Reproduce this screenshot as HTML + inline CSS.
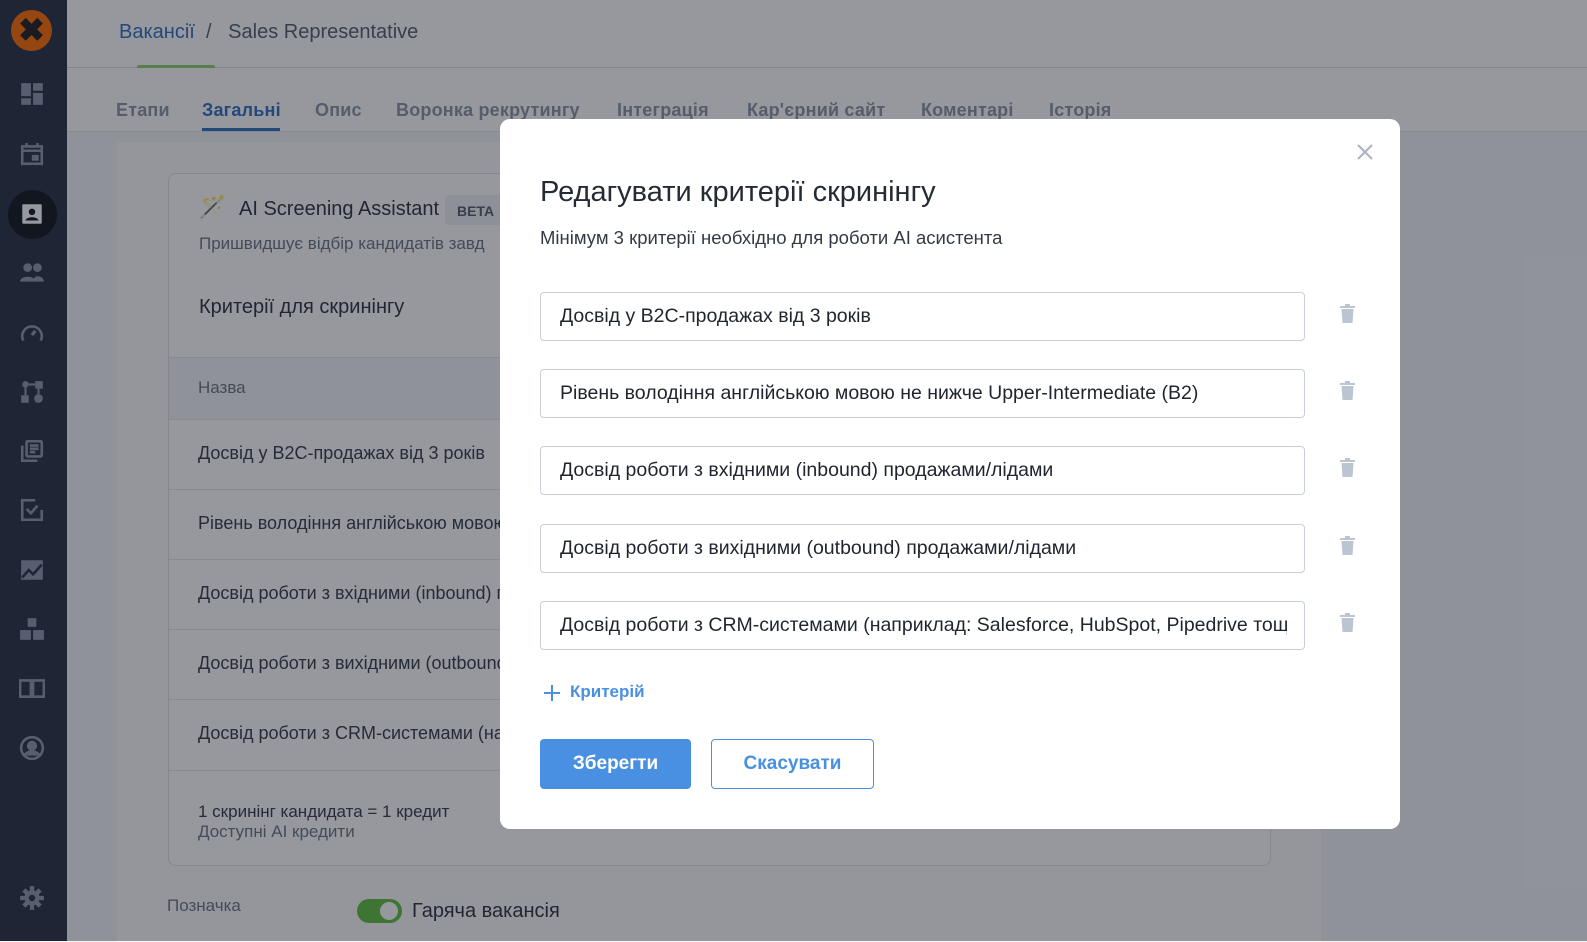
<!DOCTYPE html>
<html><head><meta charset="utf-8">
<style>
*{box-sizing:border-box;margin:0;padding:0}
body{width:1587px;height:941px;overflow:hidden;position:relative;font-family:"Liberation Sans",sans-serif;background:#f4f5f7;color:#333a45}
.abs{position:absolute}
.side{left:0;top:0;width:67px;height:941px;background:#262e40}
.ic{position:absolute;left:19px;width:26px;height:26px}
.hdr{left:67px;top:0;right:0;height:68px;background:#fff;border-bottom:1px solid #d5d9df}
.tabs{left:67px;top:68px;right:0;height:64px;background:#fff;border-bottom:1px solid #e1e4e8}
.tab{position:absolute;top:32px;font-size:18px;font-weight:bold;color:#8a93a2;letter-spacing:.2px}
.panel{left:117px;top:142px;width:1204px;height:800px;background:#fbfbfc}
.card{left:168px;top:173px;width:1103px;height:693px;border:1px solid #dde0e5;border-radius:8px;background:#fff}
.row{position:absolute;left:0;right:0;border-top:1px solid #e2e5e9;font-size:18px;color:#333a45;padding-left:29px}
.ov{left:0;top:0;width:1587px;height:941px;background:rgba(22,27,38,.45)}
.modal{left:500px;top:119px;width:900px;height:710px;background:#fff;border-radius:10px}
.inp{position:absolute;left:40px;width:765px;height:49px;border:1px solid #c9cfd9;border-radius:4px;font-size:19.5px;color:#1f252e;padding:12px 0 0 19px;white-space:nowrap;overflow:hidden}
.inp span{display:block;width:727px;overflow:hidden}
.tr{position:absolute;left:840px;width:15px;height:19px}
</style></head><body>
<div class="abs side">
  <div class="abs" style="left:11px;top:10px;width:41px;height:41px;border-radius:50%;background:#ff6a00"></div>
  <div class="abs" style="left:15px;top:14px;width:33px;height:33px;color:#1d1d1d;font-size:32px;font-weight:bold;line-height:33px;text-align:center">✖</div>
  <svg class="ic" style="top:81px" viewBox="0 0 24 24" fill="#8e96ad"><rect x="2" y="2" width="9" height="12"/><rect x="13" y="2" width="9" height="7"/><rect x="2" y="16" width="9" height="6"/><rect x="13" y="11" width="9" height="11"/></svg>
  <svg class="ic" style="top:141px" viewBox="0 0 24 24" fill="none" stroke="#8e96ad" stroke-width="2.4"><rect x="3" y="5" width="18" height="16"/><path d="M3 9h18M7 2v4M17 2v4"/><rect x="13" y="14" width="4" height="3" fill="#8e96ad"/></svg>
  <div class="abs" style="left:8px;top:190px;width:49px;height:49px;border-radius:50%;background:#0f131b"></div>
  <svg class="ic" style="top:201px" viewBox="0 0 24 24"><rect x="3" y="3" width="18" height="18" fill="#fff" rx="1"/><circle cx="12" cy="10" r="3" fill="#0f131b"/><path d="M6 18c1-4 11-4 12 0z" fill="#0f131b"/></svg>
  <svg class="ic" style="top:260px" viewBox="0 0 24 24" fill="#8e96ad"><circle cx="8" cy="7" r="4"/><circle cx="17" cy="7" r="4"/><path d="M1 20c0-6 14-6 14 0zM13 20c0-3 2-5 4-5s6 1 6 5z"/></svg>
  <svg class="ic" style="top:320px" viewBox="0 0 24 24" fill="none" stroke="#8e96ad" stroke-width="2.4"><path d="M4 19a9 9 0 1 1 16 0"/><path d="M12 14l3-4" stroke-width="3"/></svg>
  <svg class="ic" style="top:379px" viewBox="0 0 24 24" fill="#8e96ad"><circle cx="6" cy="5" r="3"/><rect x="15" y="2" width="7" height="7"/><rect x="2" y="15" width="7" height="7"/><circle cx="18" cy="18" r="4"/><path d="M6 8v7M9 5h6M18 9v5" stroke="#8e96ad" stroke-width="2"/></svg>
  <svg class="ic" style="top:438px" viewBox="0 0 24 24" fill="none" stroke="#8e96ad" stroke-width="2.4"><path d="M3 7v14h14"/><rect x="7" y="3" width="14" height="14" rx="1"/><path d="M10 7h8M10 10h8M10 13h5"/></svg>
  <svg class="ic" style="top:497px" viewBox="0 0 24 24" fill="none" stroke="#8e96ad" stroke-width="2.4"><path d="M21 12v9H3V3h12"/><path d="M7 11l4 4 6-7"/></svg>
  <svg class="ic" style="top:557px" viewBox="0 0 24 24" fill="#8e96ad"><path d="M2 3h20v18H2z"/><path d="M3 19l6-7 4 4 8-9" stroke="#262e40" stroke-width="2.4" fill="none"/></svg>
  <svg class="ic" style="top:616px" viewBox="0 0 24 24" fill="#8e96ad"><rect x="8" y="2" width="8" height="8"/><rect x="1" y="13" width="10" height="9"/><rect x="13" y="13" width="10" height="9"/></svg>
  <svg class="ic" style="top:675px" viewBox="0 0 24 24" fill="none" stroke="#8e96ad" stroke-width="2.4"><path d="M1 5h10v15H1zM13 5h10v15H13z"/></svg>
  <svg class="ic" style="top:735px" viewBox="0 0 24 24" fill="none" stroke="#8e96ad" stroke-width="2.4"><circle cx="12" cy="12" r="10"/><circle cx="12" cy="10" r="3.5" fill="#8e96ad"/><path d="M5 19c3-5 11-5 14 0" fill="#8e96ad"/></svg>
  <svg class="ic" style="top:885px" viewBox="0 0 24 24" fill="#8e96ad"><circle cx="12" cy="12" r="7"/><path d="M10 1h4v5h-4zM10 18h4v5h-4zM1 10h5v4H1zM18 10h5v4h-5zM3 6l3-3 4 4-3 3zM14 17l3-3 4 4-3 3zM3 18l4-4 3 3-4 4zM14 7l4-4 3 3-4 4z"/><circle cx="12" cy="12" r="3" fill="#262e40"/></svg>
</div>
<div class="abs hdr">
  <div class="abs" style="left:52px;top:21px;font-size:20px;color:#2e6fc4">Вакансії <span style="color:#555d6a">&nbsp;/&nbsp;&nbsp; Sales Representative</span></div>
  <div class="abs" style="left:70px;top:65px;width:78px;height:4px;background:#8fd46f;border-radius:2px"></div>
</div>
<div class="abs tabs">
  <div class="tab" style="left:49px">Етапи</div>
  <div class="tab" style="left:135px;color:#2e6fc4">Загальні</div>
  <div class="abs" style="left:135px;top:60px;width:78px;height:3px;background:#2e6fc4"></div>
  <div class="tab" style="left:248px">Опис</div>
  <div class="tab" style="left:329px">Воронка рекрутингу</div>
  <div class="tab" style="left:550px">Інтеграція</div>
  <div class="tab" style="left:680px">Кар'єрний сайт</div>
  <div class="tab" style="left:854px">Коментарі</div>
  <div class="tab" style="left:982px">Історія</div>
</div>
<div class="abs panel"></div>
<div class="abs card">
  <div class="abs" style="left:30px;top:20px;font-size:22px;color:#bf5a1a">🪄</div>
  <div class="abs" style="left:70px;top:24px;font-size:20px;color:#2b313c">AI Screening Assistant</div>
  <div class="abs" style="left:276px;top:21px;width:60px;height:30px;background:#eef0f3;border-radius:4px;font-size:14px;font-weight:bold;color:#555d6a;padding:8px 0 0 12px">BETA</div>
  <div class="abs" style="left:30px;top:60px;font-size:17px;color:#6b7382">Пришвидшує відбір кандидатів завд</div>
  <div class="abs" style="left:30px;top:122px;font-size:20px;color:#2b313c">Критерії для скринінгу</div>
  <div class="row" style="top:183px;height:62px;background:#f3f4f6;color:#6b7382;padding-top:20px;font-size:17px">Назва</div>
  <div class="row" style="top:245px;height:70px;padding-top:23px">Досвід у B2C-продажах від 3 років</div>
  <div class="row" style="top:315px;height:70px;padding-top:23px">Рівень володіння англійською мовою</div>
  <div class="row" style="top:385px;height:70px;padding-top:23px">Досвід роботи з вхідними (inbound) п</div>
  <div class="row" style="top:455px;height:70px;padding-top:23px">Досвід роботи з вихідними (outbound</div>
  <div class="row" style="top:525px;height:71px;padding-top:23px">Досвід роботи з CRM-системами (нап</div>
  <div class="row" style="top:596px;height:96px;padding-top:31px;font-size:17px;line-height:20px">1 скринінг кандидата = 1 кредит<br><span style="color:#6b7382">Доступні AI кредити</span></div>
</div>
<div class="abs" style="left:167px;top:896px;font-size:17px;color:#6b7382">Позначка</div>
<div class="abs" style="left:357px;top:899px;width:45px;height:24px;border-radius:12px;background:#5fbf3f"></div>
<div class="abs" style="left:380px;top:902px;width:18px;height:18px;border-radius:50%;background:#fff"></div>
<div class="abs" style="left:412px;top:900px;font-size:20px;color:#2b313c">Гаряча вакансія</div>
<div class="abs ov"></div>
<div class="abs modal">
  <svg class="abs" style="left:857px;top:25px;width:16px;height:16px" viewBox="0 0 16 16" stroke="#a9b3c4" stroke-width="2"><path d="M1 1l14 14M15 1L1 15"/></svg>
  <div class="abs" style="left:40px;top:57px;font-size:29px;color:#252b35">Редагувати критерії скринінгу</div>
  <div class="abs" style="left:40px;top:108px;font-size:18.5px;color:#333a45">Мінімум 3 критерії необхідно для роботи AI асистента</div>
  <div class="inp" style="top:173px"><span>Досвід у B2C-продажах від 3 років</span></div>
  <div class="inp" style="top:250px"><span>Рівень володіння англійською мовою не нижче Upper-Intermediate (B2)</span></div>
  <div class="inp" style="top:327px"><span>Досвід роботи з вхідними (inbound) продажами/лідами</span></div>
  <div class="inp" style="top:405px"><span>Досвід роботи з вихідними (outbound) продажами/лідами</span></div>
  <div class="inp" style="top:482px"><span>Досвід роботи з CRM-системами (наприклад: Salesforce, HubSpot, Pipedrive тощо)</span></div>
  <svg class="tr" style="top:185px" viewBox="0 0 15 19" fill="#bcc3d1"><rect x="0" y="2" width="15" height="2"/><rect x="5" y="0" width="5" height="2"/><path d="M1.5 5h12l-1 14h-10z"/></svg>
  <svg class="tr" style="top:262px" viewBox="0 0 15 19" fill="#bcc3d1"><rect x="0" y="2" width="15" height="2"/><rect x="5" y="0" width="5" height="2"/><path d="M1.5 5h12l-1 14h-10z"/></svg>
  <svg class="tr" style="top:339px" viewBox="0 0 15 19" fill="#bcc3d1"><rect x="0" y="2" width="15" height="2"/><rect x="5" y="0" width="5" height="2"/><path d="M1.5 5h12l-1 14h-10z"/></svg>
  <svg class="tr" style="top:417px" viewBox="0 0 15 19" fill="#bcc3d1"><rect x="0" y="2" width="15" height="2"/><rect x="5" y="0" width="5" height="2"/><path d="M1.5 5h12l-1 14h-10z"/></svg>
  <svg class="tr" style="top:494px" viewBox="0 0 15 19" fill="#bcc3d1"><rect x="0" y="2" width="15" height="2"/><rect x="5" y="0" width="5" height="2"/><path d="M1.5 5h12l-1 14h-10z"/></svg>
  <svg class="abs" style="left:44px;top:566px;width:16px;height:16px" viewBox="0 0 16 16" stroke="#4a90e2" stroke-width="2"><path d="M8 0v16M0 8h16"/></svg>
  <div class="abs" style="left:70px;top:563px;font-size:17px;font-weight:bold;color:#4a90e2">Критерій</div>
  <div class="abs" style="left:40px;top:620px;width:151px;height:50px;background:#4a90e2;border-radius:4px;color:#fff;font-size:19px;font-weight:bold;text-align:center;line-height:50px">Зберегти</div>
  <div class="abs" style="left:211px;top:620px;width:163px;height:50px;border:1px solid #4a90e2;border-radius:4px;color:#4a90e2;font-size:19px;font-weight:bold;text-align:center;line-height:48px">Скасувати</div>
</div>
</body></html>
